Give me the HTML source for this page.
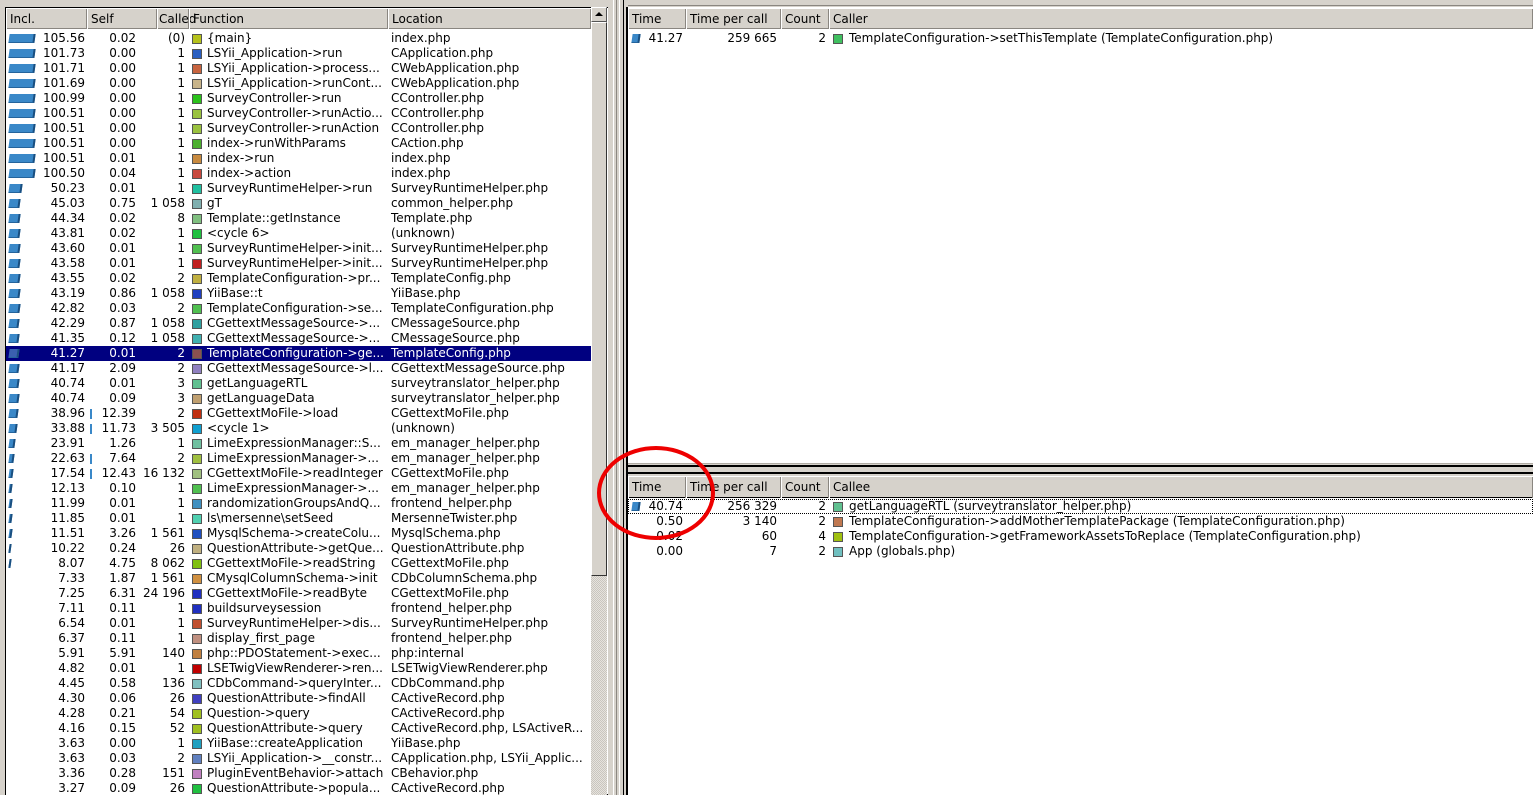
<!DOCTYPE html>
<html><head><meta charset="utf-8"><style>
*{margin:0;padding:0;box-sizing:border-box}
body{width:1533px;height:795px;overflow:hidden;background:#d6d2cb;font:12px "DejaVu Sans","Liberation Sans",sans-serif;color:#000;position:relative}
.abs{position:absolute}
.hdr{position:absolute;height:21px;background:#d6d2cb;border-top:1px solid #fff;border-bottom:1px solid #8a8680}
.hdr span{position:absolute;top:0;height:20px;line-height:20px;padding-left:3px;border-right:1px solid #8a8680;border-left:1px solid #fff;white-space:nowrap}
.list{position:absolute;background:#fff;overflow:hidden}
.r{position:relative;height:15px;line-height:15px;white-space:nowrap}
.r span{position:absolute;top:0}
.a{right:506px}.s{right:455px}.c{right:406px}.f{left:201px}.l{left:385px}
.r u{position:absolute;left:186px;top:3px;width:10px;height:10px;border:1px solid #555}
.b{position:absolute;left:3px;top:3px;height:9px;background:#3a88c8;border-right:2px solid #1a4f80;border-bottom:1px solid #24649c;transform:skewX(-8deg)}
.sb{position:absolute;left:84px;top:3px;width:2px;height:10px;background:#3a88c8}
.sel{background:#000080;color:#fff}
.sel .b{background:#3a60b0}
</style></head><body>
<div class="abs" style="left:628px;top:0;width:905px;height:6px;border-bottom:1px solid #8a8680"></div>
<!-- left pane -->
<div class="abs" style="left:5px;top:7px;width:603px;height:788px;border:1px solid #000;border-right:none;background:#fff"></div>
<div class="hdr" style="left:6px;top:8px;width:585px">
<span style="left:0;width:81px">Incl.</span><span style="left:81px;width:70px">Self</span><span style="left:151px;width:32px;padding-left:1px">Called</span><span style="left:183px;width:199px">Function</span><span style="left:382px;width:203px">Location</span>
</div>
<!-- scrollbar -->
<div class="abs" style="left:591px;top:7px;width:16px;height:788px;background:repeating-conic-gradient(#e6e3de 0 25%,#c9c5be 0 50%) 0 0/2px 2px"></div>
<div class="abs" style="left:591px;top:7px;width:16px;height:15px;background:#d6d2cb;border:1px solid;border-color:#fff #555 #555 #fff"></div>
<div class="abs" style="left:595px;top:12px;width:0;height:0;border-left:4px solid transparent;border-right:4px solid transparent;border-bottom:4px solid #000"></div>
<div class="abs" style="left:591px;top:22px;width:16px;height:554px;background:#d6d2cb;border:1px solid;border-color:#fff #333 #333 #fff"></div>
<!-- divider -->
<div class="abs" style="left:608px;top:0;width:20px;height:795px;background:#d6d2cb"></div>
<div class="abs" style="left:613px;top:0;width:1px;height:795px;background:#fff"></div>
<div class="abs" style="left:616px;top:0;width:1px;height:795px;background:#8a8680"></div>
<div class="abs" style="left:619px;top:0;width:1px;height:795px;background:#fff"></div>
<div class="abs" style="left:623px;top:0;width:1px;height:795px;background:#000"></div>
<div class="abs" style="left:626px;top:7px;width:2px;height:788px;background:#000"></div>

<div class="list" style="left:6px;top:31px;width:585px;height:764px">
<div class="r"><i class="b" style="width:26px"></i><span class="a">105.56</span><span class="s">0.02</span><span class="c">(0)</span><u style="background:#b5c21b"></u><span class="f">{main}</span><span class="l">index.php</span></div>
<div class="r"><i class="b" style="width:26px"></i><span class="a">101.73</span><span class="s">0.00</span><span class="c">1</span><u style="background:#2a5fc1"></u><span class="f">LSYii_Application-&gt;run</span><span class="l">CApplication.php</span></div>
<div class="r"><i class="b" style="width:26px"></i><span class="a">101.71</span><span class="s">0.00</span><span class="c">1</span><u style="background:#c8643f"></u><span class="f">LSYii_Application-&gt;process...</span><span class="l">CWebApplication.php</span></div>
<div class="r"><i class="b" style="width:26px"></i><span class="a">101.69</span><span class="s">0.00</span><span class="c">1</span><u style="background:#c8b48a"></u><span class="f">LSYii_Application-&gt;runCont...</span><span class="l">CWebApplication.php</span></div>
<div class="r"><i class="b" style="width:26px"></i><span class="a">100.99</span><span class="s">0.00</span><span class="c">1</span><u style="background:#2bc21b"></u><span class="f">SurveyController-&gt;run</span><span class="l">CController.php</span></div>
<div class="r"><i class="b" style="width:26px"></i><span class="a">100.51</span><span class="s">0.00</span><span class="c">1</span><u style="background:#9ac23f"></u><span class="f">SurveyController-&gt;runActio...</span><span class="l">CController.php</span></div>
<div class="r"><i class="b" style="width:26px"></i><span class="a">100.51</span><span class="s">0.00</span><span class="c">1</span><u style="background:#9ac23f"></u><span class="f">SurveyController-&gt;runAction</span><span class="l">CController.php</span></div>
<div class="r"><i class="b" style="width:26px"></i><span class="a">100.51</span><span class="s">0.00</span><span class="c">1</span><u style="background:#4caf30"></u><span class="f">index-&gt;runWithParams</span><span class="l">CAction.php</span></div>
<div class="r"><i class="b" style="width:26px"></i><span class="a">100.51</span><span class="s">0.01</span><span class="c">1</span><u style="background:#c88a3f"></u><span class="f">index-&gt;run</span><span class="l">index.php</span></div>
<div class="r"><i class="b" style="width:26px"></i><span class="a">100.50</span><span class="s">0.04</span><span class="c">1</span><u style="background:#c84a3f"></u><span class="f">index-&gt;action</span><span class="l">index.php</span></div>
<div class="r"><i class="b" style="width:13px"></i><span class="a">50.23</span><span class="s">0.01</span><span class="c">1</span><u style="background:#20c0a0"></u><span class="f">SurveyRuntimeHelper-&gt;run</span><span class="l">SurveyRuntimeHelper.php</span></div>
<div class="r"><i class="b" style="width:11px"></i><span class="a">45.03</span><span class="s">0.75</span><span class="c">1 058</span><u style="background:#80b0b0"></u><span class="f">gT</span><span class="l">common_helper.php</span></div>
<div class="r"><i class="b" style="width:11px"></i><span class="a">44.34</span><span class="s">0.02</span><span class="c">8</span><u style="background:#80c080"></u><span class="f">Template::getInstance</span><span class="l">Template.php</span></div>
<div class="r"><i class="b" style="width:11px"></i><span class="a">43.81</span><span class="s">0.02</span><span class="c">1</span><u style="background:#20c040"></u><span class="f">&lt;cycle 6&gt;</span><span class="l">(unknown)</span></div>
<div class="r"><i class="b" style="width:11px"></i><span class="a">43.60</span><span class="s">0.01</span><span class="c">1</span><u style="background:#50c050"></u><span class="f">SurveyRuntimeHelper-&gt;init...</span><span class="l">SurveyRuntimeHelper.php</span></div>
<div class="r"><i class="b" style="width:11px"></i><span class="a">43.58</span><span class="s">0.01</span><span class="c">1</span><u style="background:#c02020"></u><span class="f">SurveyRuntimeHelper-&gt;init...</span><span class="l">SurveyRuntimeHelper.php</span></div>
<div class="r"><i class="b" style="width:11px"></i><span class="a">43.55</span><span class="s">0.02</span><span class="c">2</span><u style="background:#c0b040"></u><span class="f">TemplateConfiguration-&gt;pr...</span><span class="l">TemplateConfig.php</span></div>
<div class="r"><i class="b" style="width:11px"></i><span class="a">43.19</span><span class="s">0.86</span><span class="c">1 058</span><u style="background:#2040c0"></u><span class="f">YiiBase::t</span><span class="l">YiiBase.php</span></div>
<div class="r"><i class="b" style="width:11px"></i><span class="a">42.82</span><span class="s">0.03</span><span class="c">2</span><u style="background:#50c050"></u><span class="f">TemplateConfiguration-&gt;se...</span><span class="l">TemplateConfiguration.php</span></div>
<div class="r"><i class="b" style="width:10px"></i><span class="a">42.29</span><span class="s">0.87</span><span class="c">1 058</span><u style="background:#30a0a0"></u><span class="f">CGettextMessageSource-&gt;...</span><span class="l">CMessageSource.php</span></div>
<div class="r"><i class="b" style="width:10px"></i><span class="a">41.35</span><span class="s">0.12</span><span class="c">1 058</span><u style="background:#40b0b0"></u><span class="f">CGettextMessageSource-&gt;...</span><span class="l">CMessageSource.php</span></div>
<div class="r sel"><i class="b" style="width:10px"></i><span class="a">41.27</span><span class="s">0.01</span><span class="c">2</span><u style="background:#8a5050"></u><span class="f">TemplateConfiguration-&gt;ge...</span><span class="l">TemplateConfig.php</span></div>
<div class="r"><i class="b" style="width:10px"></i><span class="a">41.17</span><span class="s">2.09</span><span class="c">2</span><u style="background:#9080c0"></u><span class="f">CGettextMessageSource-&gt;l...</span><span class="l">CGettextMessageSource.php</span></div>
<div class="r"><i class="b" style="width:10px"></i><span class="a">40.74</span><span class="s">0.01</span><span class="c">3</span><u style="background:#60c090"></u><span class="f">getLanguageRTL</span><span class="l">surveytranslator_helper.php</span></div>
<div class="r"><i class="b" style="width:10px"></i><span class="a">40.74</span><span class="s">0.09</span><span class="c">3</span><u style="background:#c0a070"></u><span class="f">getLanguageData</span><span class="l">surveytranslator_helper.php</span></div>
<div class="r"><i class="b" style="width:9px"></i><i class="sb"></i><span class="a">38.96</span><span class="s">12.39</span><span class="c">2</span><u style="background:#c03010"></u><span class="f">CGettextMoFile-&gt;load</span><span class="l">CGettextMoFile.php</span></div>
<div class="r"><i class="b" style="width:8px"></i><i class="sb"></i><span class="a">33.88</span><span class="s">11.73</span><span class="c">3 505</span><u style="background:#10a0d0"></u><span class="f">&lt;cycle 1&gt;</span><span class="l">(unknown)</span></div>
<div class="r"><i class="b" style="width:6px"></i><span class="a">23.91</span><span class="s">1.26</span><span class="c">1</span><u style="background:#70c0a0"></u><span class="f">LimeExpressionManager::S...</span><span class="l">em_manager_helper.php</span></div>
<div class="r"><i class="b" style="width:5px"></i><i class="sb"></i><span class="a">22.63</span><span class="s">7.64</span><span class="c">2</span><u style="background:#a0c040"></u><span class="f">LimeExpressionManager-&gt;...</span><span class="l">em_manager_helper.php</span></div>
<div class="r"><i class="b" style="width:4px"></i><i class="sb"></i><span class="a">17.54</span><span class="s">12.43</span><span class="c">16 132</span><u style="background:#a0c080"></u><span class="f">CGettextMoFile-&gt;readInteger</span><span class="l">CGettextMoFile.php</span></div>
<div class="r"><i class="b" style="width:3px"></i><span class="a">12.13</span><span class="s">0.10</span><span class="c">1</span><u style="background:#50c050"></u><span class="f">LimeExpressionManager-&gt;...</span><span class="l">em_manager_helper.php</span></div>
<div class="r"><i class="b" style="width:3px"></i><span class="a">11.99</span><span class="s">0.01</span><span class="c">1</span><u style="background:#4090c0"></u><span class="f">randomizationGroupsAndQ...</span><span class="l">frontend_helper.php</span></div>
<div class="r"><i class="b" style="width:3px"></i><span class="a">11.85</span><span class="s">0.01</span><span class="c">1</span><u style="background:#50d0b0"></u><span class="f">ls\mersenne\setSeed</span><span class="l">MersenneTwister.php</span></div>
<div class="r"><i class="b" style="width:3px"></i><span class="a">11.51</span><span class="s">3.26</span><span class="c">1 561</span><u style="background:#2050c0"></u><span class="f">MysqlSchema-&gt;createColu...</span><span class="l">MysqlSchema.php</span></div>
<div class="r"><i class="b" style="width:2px"></i><span class="a">10.22</span><span class="s">0.24</span><span class="c">26</span><u style="background:#c0b080"></u><span class="f">QuestionAttribute-&gt;getQue...</span><span class="l">QuestionAttribute.php</span></div>
<div class="r"><i class="b" style="width:2px"></i><span class="a">8.07</span><span class="s">4.75</span><span class="c">8 062</span><u style="background:#80c010"></u><span class="f">CGettextMoFile-&gt;readString</span><span class="l">CGettextMoFile.php</span></div>
<div class="r"><span class="a">7.33</span><span class="s">1.87</span><span class="c">1 561</span><u style="background:#d09040"></u><span class="f">CMysqlColumnSchema-&gt;init</span><span class="l">CDbColumnSchema.php</span></div>
<div class="r"><span class="a">7.25</span><span class="s">6.31</span><span class="c">24 196</span><u style="background:#2030c0"></u><span class="f">CGettextMoFile-&gt;readByte</span><span class="l">CGettextMoFile.php</span></div>
<div class="r"><span class="a">7.11</span><span class="s">0.11</span><span class="c">1</span><u style="background:#2030c0"></u><span class="f">buildsurveysession</span><span class="l">frontend_helper.php</span></div>
<div class="r"><span class="a">6.54</span><span class="s">0.01</span><span class="c">1</span><u style="background:#c05030"></u><span class="f">SurveyRuntimeHelper-&gt;dis...</span><span class="l">SurveyRuntimeHelper.php</span></div>
<div class="r"><span class="a">6.37</span><span class="s">0.11</span><span class="c">1</span><u style="background:#c09080"></u><span class="f">display_first_page</span><span class="l">frontend_helper.php</span></div>
<div class="r"><span class="a">5.91</span><span class="s">5.91</span><span class="c">140</span><u style="background:#c08040"></u><span class="f">php::PDOStatement-&gt;exec...</span><span class="l">php:internal</span></div>
<div class="r"><span class="a">4.82</span><span class="s">0.01</span><span class="c">1</span><u style="background:#c00000"></u><span class="f">LSETwigViewRenderer-&gt;ren...</span><span class="l">LSETwigViewRenderer.php</span></div>
<div class="r"><span class="a">4.45</span><span class="s">0.58</span><span class="c">136</span><u style="background:#80c0c0"></u><span class="f">CDbCommand-&gt;queryInter...</span><span class="l">CDbCommand.php</span></div>
<div class="r"><span class="a">4.30</span><span class="s">0.06</span><span class="c">26</span><u style="background:#4040c0"></u><span class="f">QuestionAttribute-&gt;findAll</span><span class="l">CActiveRecord.php</span></div>
<div class="r"><span class="a">4.28</span><span class="s">0.21</span><span class="c">54</span><u style="background:#a0c020"></u><span class="f">Question-&gt;query</span><span class="l">CActiveRecord.php</span></div>
<div class="r"><span class="a">4.16</span><span class="s">0.15</span><span class="c">52</span><u style="background:#a0c020"></u><span class="f">QuestionAttribute-&gt;query</span><span class="l">CActiveRecord.php, LSActiveR...</span></div>
<div class="r"><span class="a">3.63</span><span class="s">0.00</span><span class="c">1</span><u style="background:#20a0c0"></u><span class="f">YiiBase::createApplication</span><span class="l">YiiBase.php</span></div>
<div class="r"><span class="a">3.63</span><span class="s">0.03</span><span class="c">2</span><u style="background:#6080c0"></u><span class="f">LSYii_Application-&gt;__constr...</span><span class="l">CApplication.php, LSYii_Applic...</span></div>
<div class="r"><span class="a">3.36</span><span class="s">0.28</span><span class="c">151</span><u style="background:#c080c0"></u><span class="f">PluginEventBehavior-&gt;attach</span><span class="l">CBehavior.php</span></div>
<div class="r"><span class="a">3.27</span><span class="s">0.09</span><span class="c">26</span><u style="background:#20c040"></u><span class="f">QuestionAttribute-&gt;popula...</span><span class="l">CActiveRecord.php</span></div>
</div>

<!-- right top pane -->
<div class="abs" style="left:628px;top:7px;width:905px;height:456px;background:#fff"></div>
<div class="hdr" style="left:628px;top:8px;width:905px">
<span style="left:0;width:58px">Time</span><span style="left:58px;width:95px">Time per call</span><span style="left:153px;width:48px">Count</span><span style="left:201px;width:704px">Caller</span>
</div>
<div class="abs" style="left:628px;top:31px;width:905px;height:15px;line-height:15px;white-space:nowrap">
<i class="b" style="left:4px;width:8px"></i>
<span class="abs" style="right:850px">41.27</span>
<span class="abs" style="right:756px">259 665</span>
<span class="abs" style="right:707px">2</span>
<u class="abs" style="left:205px;top:3px;width:10px;height:10px;border:1px solid #555;background:#40c060"></u>
<span class="abs" style="left:221px">TemplateConfiguration-&gt;setThisTemplate (TemplateConfiguration.php)</span>
</div>

<!-- separator -->
<div class="abs" style="left:628px;top:463px;width:905px;height:14px;background:#d6d2cb;border-top:1px solid #b0aca5"></div>
<div class="abs" style="left:628px;top:465px;width:905px;height:2px;background:#000"></div>
<div class="abs" style="left:628px;top:472px;width:905px;height:2px;background:#000"></div>
<div class="abs" style="left:628px;top:477px;width:905px;height:318px;background:#fff"></div>
<div class="hdr" style="left:628px;top:476px;width:905px;height:22px;border-bottom:1px solid #000">
<span style="left:0;width:58px;height:21px;line-height:21px">Time</span><span style="left:58px;width:95px;height:21px;line-height:21px">Time per call</span><span style="left:153px;width:48px;height:21px;line-height:21px">Count</span><span style="left:201px;width:704px;height:21px;line-height:21px">Callee</span>
</div>
<div class="abs" style="left:628px;top:499px;width:905px;height:60px;line-height:15px;white-space:nowrap">
<div class="abs" style="left:0;top:0;width:905px;height:15px;border:1px dotted #000"></div>
<i class="b" style="left:4px;width:8px"></i>
<span class="abs" style="top:0;right:850px">40.74</span><span class="abs" style="top:0;right:756px">256 329</span><span class="abs" style="top:0;right:707px">2</span>
<u class="abs" style="left:205px;top:3px;width:10px;height:10px;border:1px solid #555;background:#60c090"></u><span class="abs" style="top:0;left:221px">getLanguageRTL (surveytranslator_helper.php)</span>
<span class="abs" style="top:15px;right:850px">0.50</span><span class="abs" style="top:15px;right:756px">3 140</span><span class="abs" style="top:15px;right:707px">2</span>
<u class="abs" style="left:205px;top:18px;width:10px;height:10px;border:1px solid #555;background:#c07850"></u><span class="abs" style="top:15px;left:221px">TemplateConfiguration-&gt;addMotherTemplatePackage (TemplateConfiguration.php)</span>
<span class="abs" style="top:30px;right:850px">0.02</span><span class="abs" style="top:30px;right:756px">60</span><span class="abs" style="top:30px;right:707px">4</span>
<u class="abs" style="left:205px;top:33px;width:10px;height:10px;border:1px solid #555;background:#a0c010"></u><span class="abs" style="top:30px;left:221px">TemplateConfiguration-&gt;getFrameworkAssetsToReplace (TemplateConfiguration.php)</span>
<span class="abs" style="top:45px;right:850px">0.00</span><span class="abs" style="top:45px;right:756px">7</span><span class="abs" style="top:45px;right:707px">2</span>
<u class="abs" style="left:205px;top:48px;width:10px;height:10px;border:1px solid #555;background:#70c0c0"></u><span class="abs" style="top:45px;left:221px">App (globals.php)</span>
</div>

<!-- red ellipse -->
<svg class="abs" style="left:590px;top:440px" width="140" height="110"><ellipse cx="66" cy="53" rx="57" ry="45" fill="none" stroke="#e00" stroke-width="4"/></svg>
</body></html>
